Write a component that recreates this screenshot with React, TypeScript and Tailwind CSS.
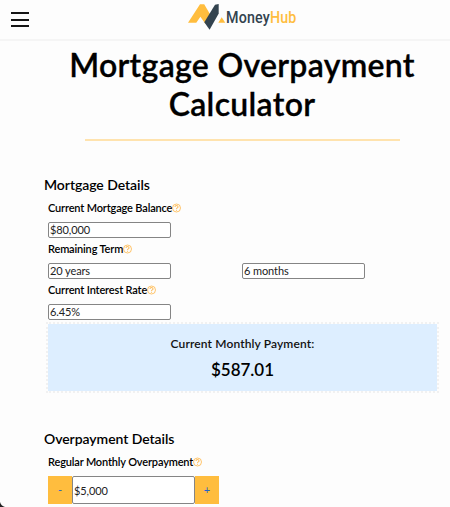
import React from 'react';

function Help() {
  return (
    <svg className="h-[10px] w-[9px] shrink-0" viewBox="0 0 9 10" fill="none" stroke="#ffbe5c" strokeWidth="0.9">
      <circle cx="4.5" cy="5" r="4" />
      <path strokeWidth="1.1" d="M3 4C3 2.1 6 2.1 6 3.9C6 4.9 4.5 4.8 4.5 6M4.5 6.7V7.7" />
    </svg>
  );
}

function Label({ children }: { children: React.ReactNode }) {
  return (
    <div className="flex h-[14px] items-center whitespace-nowrap text-[11px] font-semibold leading-[14px] text-black">
      <span className="tracking-[-0.16px]">{children}</span>
      <Help />
    </div>
  );
}

function Field({ value }: { value: string }) {
  return (
    <input
      className="block h-4 w-[123px] rounded-[2px] border border-[#858585] bg-white px-px pb-px text-[11px] leading-[13px] tracking-[-0.1px] text-[#222] outline-none"
      defaultValue={value}
    />
  );
}

function Logo() {
  return (
    <div className="flex pt-[3px]">
      <svg className="h-[28px] w-[38px]" viewBox="0 0 38 28">
        <path d="M0 19.7L12 1.3H16.2L22.8 12.5L17.5 21L12.4 13.8L8.3 19.7Z" fill="#ffbd3e" />
        <path d="M16.3 19.2L27 1.8L30.7 1V10.5L21.6 26.8Z" fill="#33434f" />
        <path d="M30.3 19.7L33.7 14.2L37.3 19.7Z" fill="#ffbd3e" />
      </svg>
      <div className="flex h-5 origin-left scale-x-[0.84] whitespace-nowrap pt-[3px] font-['Roboto',sans-serif] text-[17px] font-medium leading-[22px] tracking-[0.2px] text-[#33434f]">
        <span>Money</span><span className="text-[#ffbd3e]">Hub</span>
      </div>
    </div>
  );
}

export default function App() {
  return (
    <div className="relative h-[507px] w-[450px] overflow-hidden bg-[#fdfdfd] font-['Lato',sans-serif] text-black">
      <header className="flex h-[41px] items-start border-b-2 border-[#f5f5f5]">
        <button className="ml-[11px] mt-[12px] flex w-[18px] flex-col gap-[4.5px]" aria-label="Menu">
          <span className="h-[2px] w-full bg-[#151515]" />
          <span className="h-[2px] w-full bg-[#151515]" />
          <span className="h-[2px] w-full bg-[#151515]" />
        </button>
        <div className="ml-[159px]"><Logo /></div>
      </header>
      <h1 className="mt-[5px] pl-[34px] text-center text-[32px] font-semibold leading-[38.5px] tracking-[0.3px] [-webkit-text-stroke:0.3px_black]">
        Mortgage Overpayment<br />Calculator
      </h1>
      <hr className="ml-[85px] mt-[16px] w-[315px] border-0 border-t-2 border-[#ffe3ae]" />
      <main className="pl-[44px] pt-[35px]">
        <h2 className="h-[18px] whitespace-nowrap text-[14px] font-semibold leading-[18px] tracking-[-0.06px]">Mortgage Details</h2>
        <div className="pl-1 pt-[7px]">
          <Label>Current Mortgage Balance</Label>
          <div className="pt-[7px]"><Field value="$80,000" /></div>
          <div className="pt-[4px]"><Label>Remaining Term</Label></div>
          <div className="flex gap-[71px] pt-[7px]"><Field value="20 years" /><Field value="6 months" /></div>
          <div className="pt-[4px]"><Label>Current Interest Rate</Label></div>
          <div className="pt-[7px]"><Field value="6.45%" /></div>
        </div>
        <section className="ml-[2px] mt-[2px] h-[71px] w-[393px] border-2 border-dotted border-[#f1f1f1] bg-[#ddeeff] bg-clip-padding pt-[12px] text-center">
          <div className="text-[12px] font-semibold leading-[16px] tracking-[0.12px] text-[#111]">Current Monthly Payment:</div>
          <div className="mt-[7px] text-[17px] font-semibold leading-[22px]">$587.01</div>
        </section>
        <h2 className="mt-[37px] h-[18px] whitespace-nowrap text-[14px] font-semibold leading-[18px] tracking-[-0.06px]">Overpayment Details</h2>
        <div className="pl-1 pt-[7px]">
          <Label>Regular Monthly Overpayment</Label>
          <div className="flex pt-[7px]">
            <button className="h-[28px] w-6 bg-[#ffbd3e] text-[11px] text-[#2563c9]">-</button>
            <input className="h-[28px] w-[123px] rounded-[2px] border border-[#858585] bg-white px-px text-[11px] tracking-[-0.1px] text-[#222] outline-none" defaultValue="$5,000" />
            <button className="h-[28px] w-6 bg-[#ffbd3e] text-[11px] text-[#2563c9]">+</button>
          </div>
        </div>
      </main>
      <svg className="absolute bottom-0 left-0 h-[5px] w-[5px]" viewBox="0 0 5 5"><path d="M0 0Q1 4 5 5H0Z" fill="#222" /></svg>
    </div>
  );
}
